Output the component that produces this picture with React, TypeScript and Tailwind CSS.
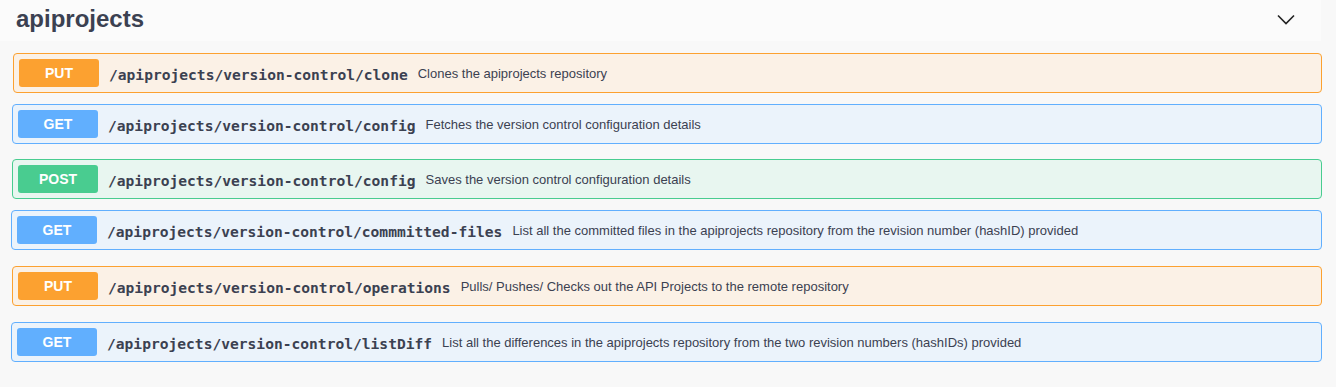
import React from "react";

type Method = "GET" | "PUT" | "POST";

type Op = {
    method: Method;
    path: string;
    summary: string;
    mt: string;
    ml: string;
};

const ops: Op[] = [
    { method: "PUT", path: "/apiprojects/version-control/clone", summary: "Clones the apiprojects repository", mt: "mt-[12px]", ml: "ml-[13px]" },
    { method: "GET", path: "/apiprojects/version-control/config", summary: "Fetches the version control configuration details", mt: "mt-[11px]", ml: "ml-[12px]" },
    { method: "POST", path: "/apiprojects/version-control/config", summary: "Saves the version control configuration details", mt: "mt-[15px]", ml: "ml-[12px]" },
    { method: "GET", path: "/apiprojects/version-control/commmitted-files", summary: "List all the committed files in the apiprojects repository from the revision number (hashID) provided", mt: "mt-[11px]", ml: "ml-[11px]" },
    { method: "PUT", path: "/apiprojects/version-control/operations", summary: "Pulls/ Pushes/ Checks out the API Projects to the remote repository", mt: "mt-[16px]", ml: "ml-[12px]" },
    { method: "GET", path: "/apiprojects/version-control/listDiff", summary: "List all the differences in the apiprojects repository from the two revision numbers (hashIDs) provided", mt: "mt-[16px]", ml: "ml-[11px]" },
];

const styles: Record<Method, { box: string; badge: string }> = {
    GET: { box: "bg-[#ebf3fb] border-[#61affe]", badge: "bg-[#61affe]" },
    PUT: { box: "bg-[#fbf1e6] border-[#fca130]", badge: "bg-[#fca130]" },
    POST: { box: "bg-[#e8f6f0] border-[#49cc90]", badge: "bg-[#49cc90]" },
};

function OpBlock({ op }: { op: Op }) {
    const s = styles[op.method];
    return (
        <div className={`${op.mt} ${op.ml} mr-[14px] h-[40px] border rounded-[4px] flex items-center px-[5px] ${s.box}`}>
            <span className={`${s.badge} w-[80px] h-[28px] rounded-[3px] flex items-center justify-center text-white text-[14px] font-bold pt-[1px]`}>
                {op.method}
            </span>
            <span className="ml-[10px] mt-[3px] text-[#3b4151] font-bold text-[14.6px] font-['DejaVu_Sans_Mono',monospace]">
                {op.path}
            </span>
            <span className="ml-[10px] mt-[1px] text-[#3b4151] text-[13px]">{op.summary}</span>
        </div>
    );
}

export default function App() {
    return (
        <div className="w-[1336px] h-[387px] bg-[#f8f8f8] font-['Liberation_Sans',Arial,sans-serif] overflow-hidden">
            <div className="h-[41px] w-[1321px] bg-[#fbfbfb] flex items-center justify-between pl-[16px] pr-[25px]">
                <h3 className="text-[24px] font-bold text-[#3b4151] leading-none -mt-[3px]">apiprojects</h3>
                <svg width="20" height="20" viewBox="0 0 20 20" className="-mt-[1px]">
                    <path d="M2 5.5 L10 13.5 L18 5.5" fill="none" stroke="#222" strokeWidth="1.6" />
                </svg>
            </div>
            {ops.map((op, i) => (
                <OpBlock key={i} op={op} />
            ))}
        </div>
    );
}
